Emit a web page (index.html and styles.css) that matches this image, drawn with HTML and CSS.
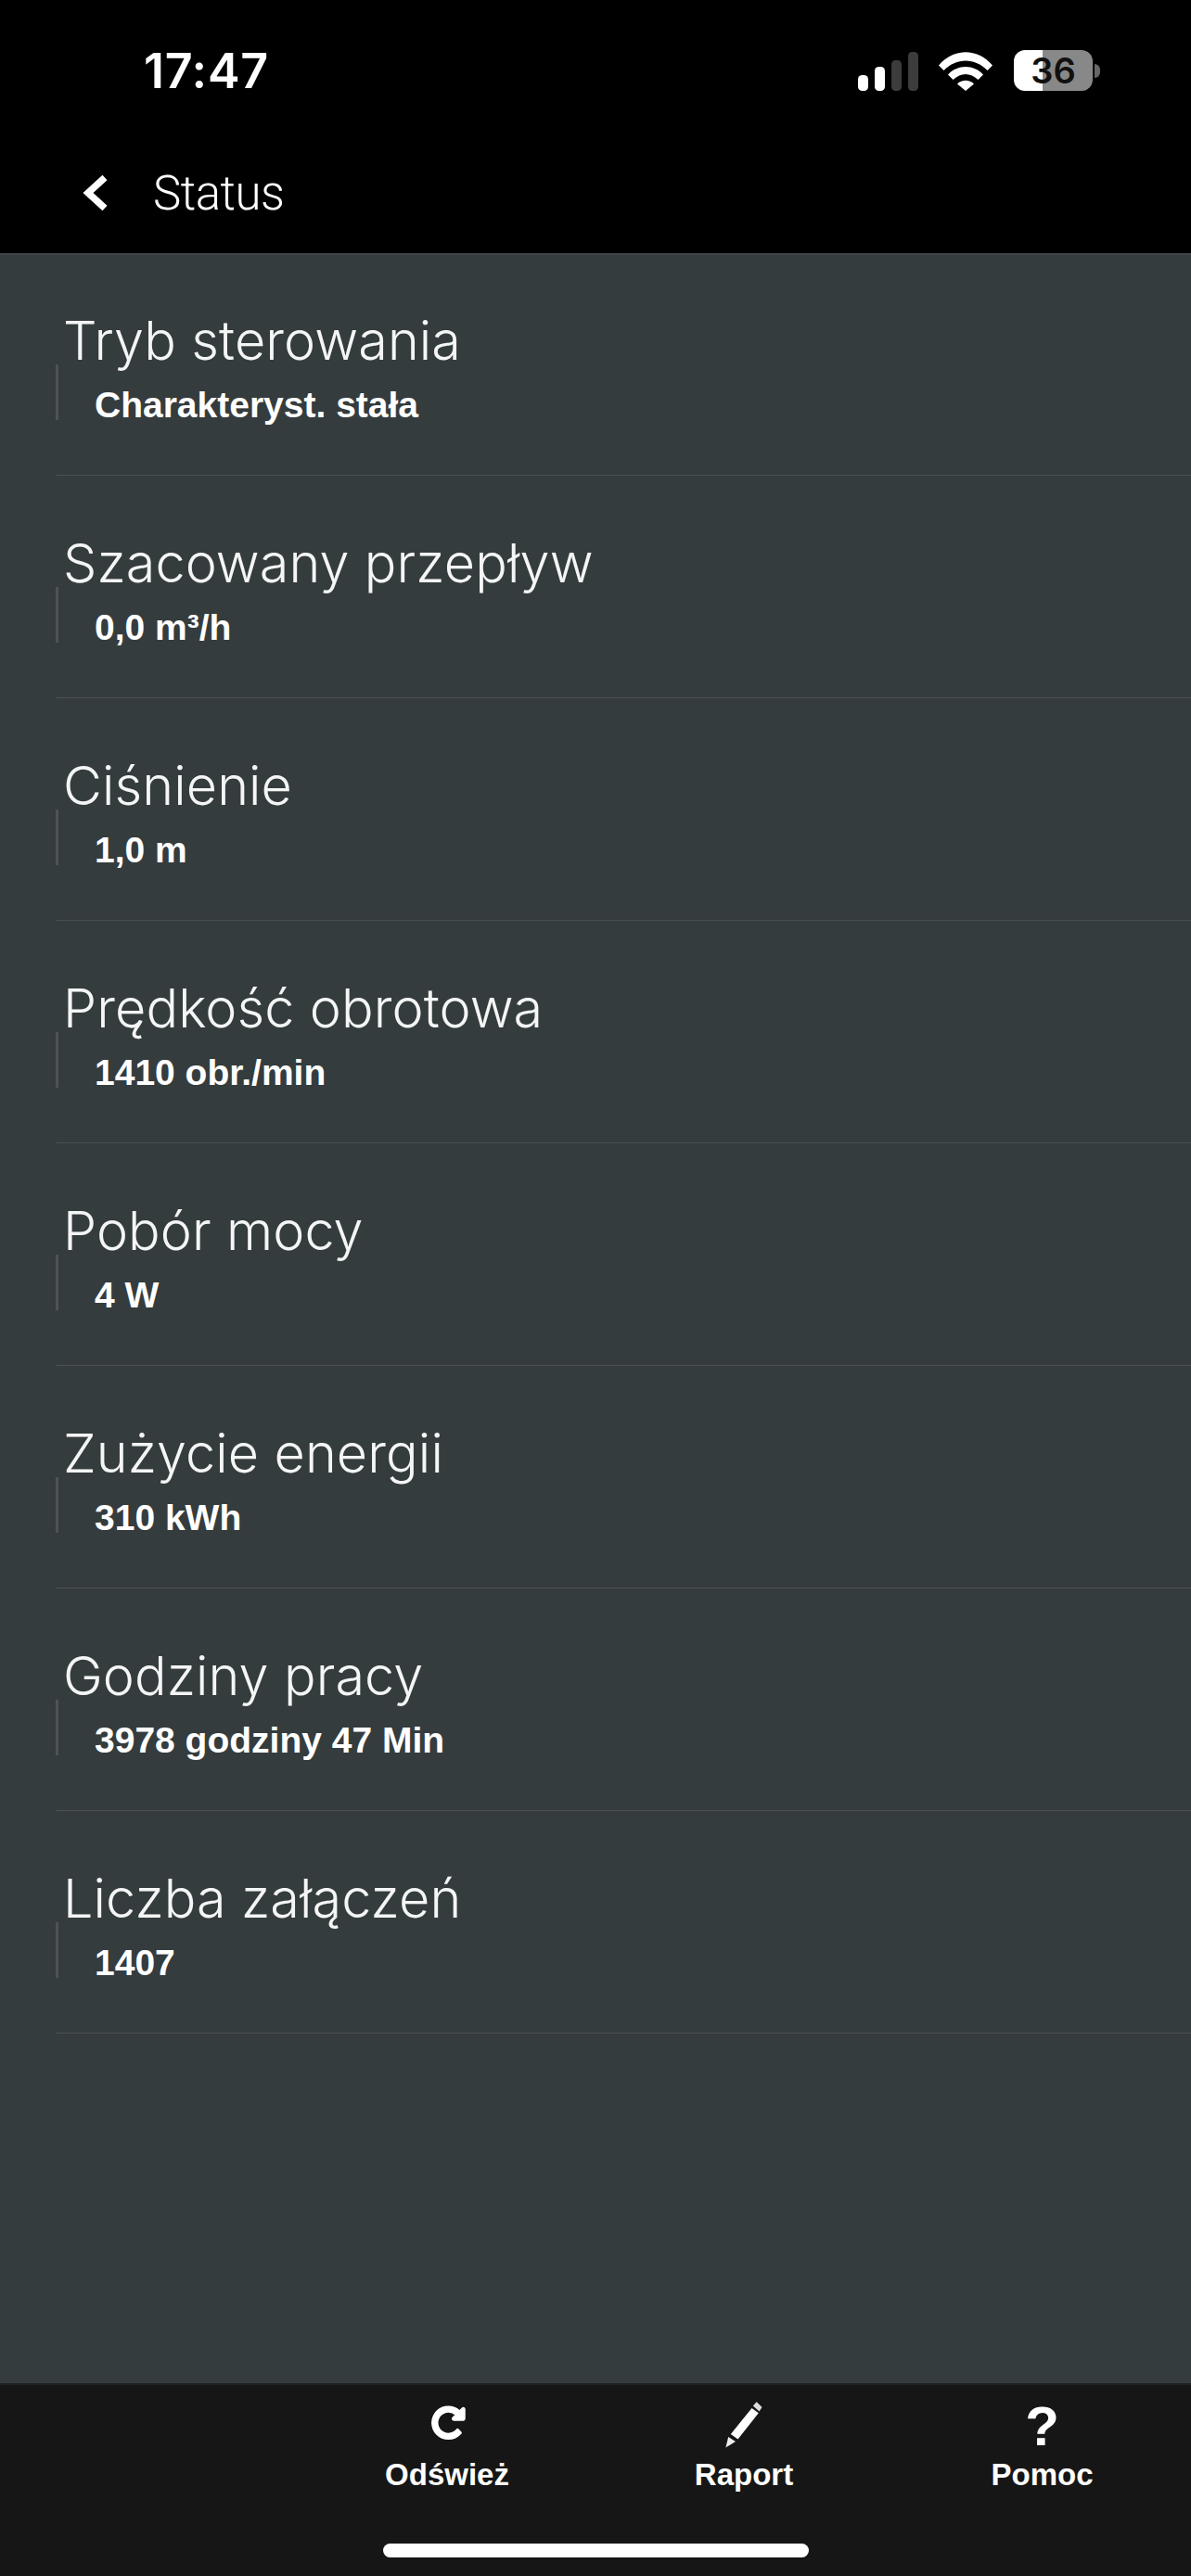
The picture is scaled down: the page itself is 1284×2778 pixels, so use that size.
FILE: index.html
```html
<!DOCTYPE html>
<html lang="en">
  <head>
    <meta charset="UTF-8" />
    <meta name="viewport" content="width=device-width, initial-scale=1.0" />
    <title>Status</title>
    <link rel="stylesheet" href="styles.css">
  </head>
  <body>
    <div class="phone">

      <div class="top-bar">
        <div class="status-bar">
          <div class="time">17:47</div>
          <div class="status-icons">
            <svg class="signal" width="65" height="42" viewBox="0 0 65 42">
              <rect x="0" y="25" width="11" height="17" rx="4.5" fill="#fff" />
              <rect x="18" y="16" width="11" height="26" rx="4.5" fill="#fff" />
              <rect x="36" y="9" width="11" height="33" rx="4.5" fill="#3c3c3c" />
              <rect x="54" y="0" width="11" height="42" rx="4.5" fill="#3c3c3c" />
            </svg>
            <svg class="wifi" width="58" height="42" viewBox="0 0 58 42">
              <path d="M0 14.500C16 -4.500 42 -4.500 58 14.500L52.500 20C39 6 19 6 5.500 20Z" fill="#fff" />
              <path d="M10 24.500C20 13 38 13 48 24.500L42.500 30C34 22 24 22 15.500 30Z" fill="#fff" />
              <path d="M20 34.500C25 29.500 33 29.500 38 34.500L29 42Z" fill="#fff" />
            </svg>
            <div class="battery">
              <div class="battery-body">36</div>
              <div class="battery-cap"></div>
            </div>
          </div>
        </div>
        <div class="nav-bar">
          <svg class="back" width="30" height="42" viewBox="0 0 30 42">
            <path d="M25 4.500L7 21L25 37.500" fill="none" stroke="#fff" stroke-width="7.500" />
          </svg>
          <div class="nav-title">Status</div>
        </div>
      </div>

      <div class="content">
        <div class="row">
          <div class="row-title">Tryb sterowania</div>
          <div class="row-value">Charakteryst. stała</div>
        </div>
        <div class="row">
          <div class="row-title">Szacowany przepływ</div>
          <div class="row-value">0,0 m³/h</div>
        </div>
        <div class="row">
          <div class="row-title">Ciśnienie</div>
          <div class="row-value">1,0 m</div>
        </div>
        <div class="row">
          <div class="row-title">Prędkość obrotowa</div>
          <div class="row-value">1410 obr./min</div>
        </div>
        <div class="row">
          <div class="row-title">Pobór mocy</div>
          <div class="row-value">4 W</div>
        </div>
        <div class="row">
          <div class="row-title">Zużycie energii</div>
          <div class="row-value">310 kWh</div>
        </div>
        <div class="row">
          <div class="row-title">Godziny pracy</div>
          <div class="row-value">3978 godziny 47 Min</div>
        </div>
        <div class="row">
          <div class="row-title">Liczba załączeń</div>
          <div class="row-value">1407</div>
        </div>
      </div>

      <div class="bottom-bar">
        <div class="tabs">
          <div class="tab">
            <svg class="tab-icon" width="40" height="50" viewBox="-40 -100 1750 2188">
              <path d="M1664 256v448q0 26-19 45t-45 19h-448q-42 0-59-40-17-39 14-69l138-138q-148-137-349-137-104 0-198.500 40.500t-163.500 109.500-109.500 163.500-40.500 198.500 40.500 198.500 109.500 163.500 163.500 109.500 198.500 40.500q119 0 225-52t179-147q7-10 23-12 15 0 25 9l137 138q9 8 9.500 20.500t-7.500 22.500q-109 132-264 204.500t-327 72.500q-156 0-298-61t-245-164-164-245-61-298 61-298 164-245 245-164 298-61q147 0 284.500 55.500t244.500 156.500l130-129q29-31 70-14 39 17 39 59z" fill="#fff" stroke="#fff" stroke-width="70" />
            </svg>
            <div class="tab-label">Odśwież</div>
          </div>
          <div class="tab">
            <svg class="tab-icon" width="40" height="50" viewBox="0 0 40 50">
              <path d="M29.800 4.600L33.700 0.200L39.500 6L36.600 10.500Z" fill="#ddd" />
              <path d="M28.500 7L35.800 12.300L13.500 40.500L5.800 35Z" fill="#fff" />
              <path d="M3.200 38L11 43L0.400 49.600Z" fill="#eee" />
            </svg>
            <div class="tab-label">Raport</div>
          </div>
          <div class="tab tab-last">
            <div class="tab-glyph">?</div>
            <div class="tab-label">Pomoc</div>
          </div>
        </div>
        <div class="home-indicator"></div>
      </div>

    </div>
  </body>
</html>
```

FILE: styles.css
```css
* {
  box-sizing: border-box;
}

html,
body {
  margin: 0;
  background: #000;
}

.phone {
  width: 1284px;
  height: 2778px;
  display: flex;
  flex-direction: column;
  font-family: "Liberation Sans", Arial, sans-serif;
  color: #fff;
}

/* top */
.top-bar {
  height: 273px;
  background: #000;
}

.status-bar {
  height: 153px;
  display: flex;
  justify-content: space-between;
  align-items: flex-start;
  padding: 45px 98px 0 155px;
}

.time {
  font-family: Inter, sans-serif;
  font-size: 52px;
  font-weight: 600;
  line-height: 63px;
  letter-spacing: 0.7px;
}

.status-icons {
  display: flex;
  align-items: flex-end;
  gap: 22px;
  padding-top: 9px;
}

.battery {
  display: flex;
  align-items: center;
  margin-left: 1px;
}

.battery-body {
  width: 85px;
  height: 44px;
  border-radius: 12px;
  background: linear-gradient(90deg, #fff 36%, #888 36%);
  color: #111;
  font-family: Inter, sans-serif;
  font-size: 38px;
  font-weight: 600;
  line-height: 44px;
  text-align: center;
}

.battery-cap {
  width: 6px;
  height: 15px;
  margin-left: 2px;
  border-radius: 0 8px 8px 0;
  background: #666;
}

.nav-bar {
  height: 120px;
  display: flex;
  align-items: center;
  padding: 0 0 10px 88px;
}

.back {
  margin-right: 47px;
}

.nav-title {
  font-family: Roboto, "Liberation Sans", sans-serif;
  font-size: 51px;
  font-weight: 300;
  letter-spacing: -0.5px;
}

/* list */
.content {
  flex: 1;
  background: #353c3e;
  box-shadow: inset 0 2px #3f4548;
}

.row {
  height: 240px;
  margin-left: 60px;
  padding-top: 59px;
  border-bottom: 1px solid #4a5053;
}

.row-title {
  margin-left: 8px;
  font-family: Inter, "Liberation Sans", sans-serif;
  font-size: 57.5px;
  font-weight: 280;
  line-height: 70px;
  letter-spacing: 0.1px;
  color: #f4f5f5;
}

.row-value {
  height: 60px;
  margin-top: -9px;
  padding: 14px 0 0 39px;
  border-left: 3px solid #4d5357;
  font-size: 39px;
  font-weight: 700;
  line-height: 60px;
}

/* bottom */
.bottom-bar {
  height: 208px;
  background: #161616;
  border-top: 2px solid #1e2224;
}

.tabs {
  display: flex;
  padding: 18px 0 0 322px;
}

.tab {
  width: 320px;
  display: flex;
  flex-direction: column;
  align-items: center;
}

.tab-last {
  padding-left: 3px;
}

.tab-icon {
  display: block;
}

.tab-glyph {
  height: 50px;
  font-size: 60px;
  font-weight: 700;
  line-height: 54px;
}

.tab-label {
  margin-top: 7px;
  font-size: 33px;
  font-weight: 700;
  line-height: 44px;
}

.home-indicator {
  width: 459px;
  height: 15px;
  margin: 52px 0 0 413px;
  border-radius: 8px;
  background: #fff;
}
```
